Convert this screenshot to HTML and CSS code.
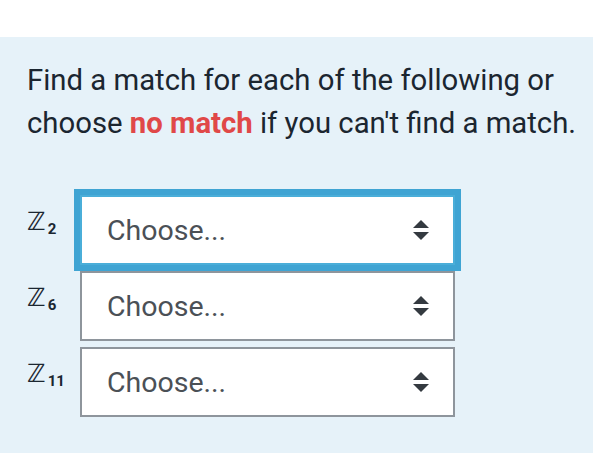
FILE: index.html
```html
<!DOCTYPE html>
<html>
<head>
<meta charset="utf-8">
<link rel="stylesheet" href="styles.css">
</head>
<body>
<div class="topbar"></div>
<div class="panel">
  <p class="prompt">Find a match for each of the following or choose <strong class="nomatch">no match</strong> if you can't find a match.</p>
  <div class="rows">
    <div class="row">
      <div class="label"><span class="z">ℤ</span><span class="sub">2</span></div>
      <div class="select focused"><span class="choose">Choose...</span>
        <svg class="arrows" width="16" height="20" viewBox="0 0 16 20"><path d="M8 0 L16 8 L0 8 Z M0 12 L16 12 L8 20 Z" fill="#343a40"/></svg>
      </div>
    </div>
    <div class="row">
      <div class="label"><span class="z">ℤ</span><span class="sub">6</span></div>
      <div class="select"><span class="choose">Choose...</span>
        <svg class="arrows" width="16" height="20" viewBox="0 0 16 20"><path d="M8 0 L16 8 L0 8 Z M0 12 L16 12 L8 20 Z" fill="#343a40"/></svg>
      </div>
    </div>
    <div class="row">
      <div class="label"><span class="z">ℤ</span><span class="sub">11</span></div>
      <div class="select"><span class="choose">Choose...</span>
        <svg class="arrows" width="16" height="20" viewBox="0 0 16 20"><path d="M8 0 L16 8 L0 8 Z M0 12 L16 12 L8 20 Z" fill="#343a40"/></svg>
      </div>
    </div>
  </div>
</div>
</body>
</html>
```

FILE: styles.css
```css
html, body {
  margin: 0;
  padding: 0;
  background: #e6f2f9;
}
body {
  font-family: Roboto, "Liberation Sans", sans-serif;
  width: 593px;
  height: 453px;
  overflow: hidden;
}
.topbar {
  height: 37px;
  background: #ffffff;
}
.panel {
  background: #e6f2f9;
  padding: 22px 0 0 27px;
}
.prompt {
  margin: 0;
  font-size: 29.3px;
  line-height: 43px;
  color: #1b2630;
  width: 562px;
}
.nomatch {
  color: #e04848;
  font-weight: 700;
}
.rows {
  margin-top: 50px;
  display: flex;
  flex-direction: column;
  gap: 6px;
}
.row {
  display: flex;
  align-items: flex-start;
}
.label {
  width: 53px;
  padding-top: 14px;
  display: flex;
  align-items: flex-start;
  color: #1b2630;
}
.z {
  font-family: "DejaVu Sans", sans-serif;
  font-size: 25px;
  line-height: 25px;
}
.sub {
  font-family: Roboto, sans-serif;
  font-weight: 700;
  font-size: 15px;
  line-height: 15px;
  margin-top: 13px;
  margin-left: 2px;
}
.select {
  position: relative;
  box-sizing: border-box;
  width: 375px;
  height: 70px;
  background: #ffffff;
  border: 2px solid #8e959c;
  display: flex;
  align-items: center;
  justify-content: space-between;
  padding: 0 24px 0 25px;
}
.select.focused {
  border-color: #4aaed9;
  box-shadow: 0 0 0 6px #3fa4d3;
  z-index: 1;
}
.choose {
  font-size: 28.5px;
  color: #4b5056;
}
.arrows {
  display: block;
}
```
